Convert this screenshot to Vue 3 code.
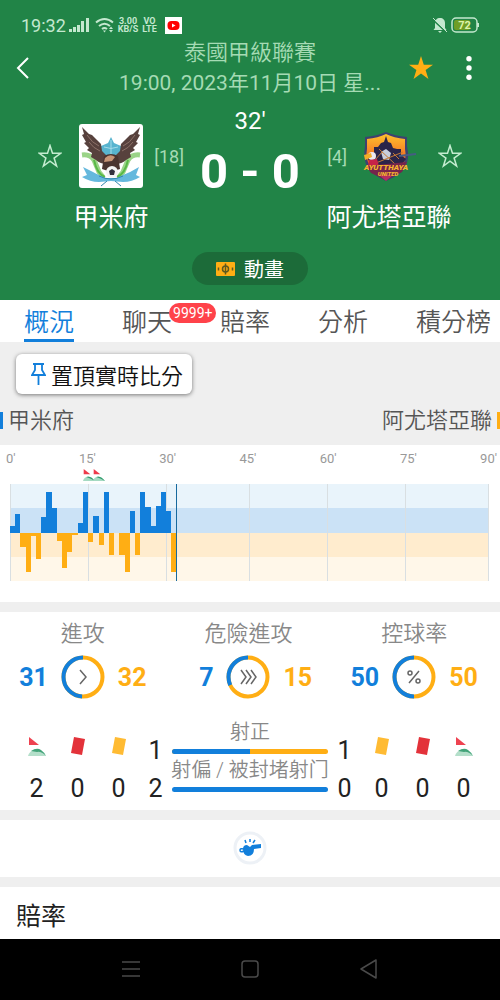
<script setup>
import { ref } from "vue";

const tabs = [
  { name: "概況" },
  { name: "聊天", badge: "9999+" },
  { name: "賠率" },
  { name: "分析" },
  { name: "積分榜" },
];
const activeTab = ref("概況");

// 45 + 1 minutes in the first half, 45 + 1 in the second
const totalMinutes = 92;
const currentMinute = 32;
const axis = ["0'", "15'", "30'", "45'", "60'", "75'", "90'"];
const gridLines = [0, 15, 30, 46, 61, 76, 92];
const corners = [15, 17];

// positive: home pressure, negative: away pressure
const pressure = [
  6, 18, -14, -39, -3, -26, 15, 40, 24, -8, -35, -19, -2, 9, 40, -9, 16, -12,
  40, -22, 0, -22, -39, 21, -22, 40, 25, 6, 26, 40, 21, -39,
];

const stats = [
  { name: "進攻", home: 31, away: 32, icon: "M19 15l6 7-6 7" },
  {
    name: "危險進攻",
    home: 7,
    away: 15,
    icon: "M15 15l5 7-5 7M20 15l5 7-5 7M25 15l5 7-5 7",
  },
  {
    name: "控球率",
    home: 50,
    away: 50,
    icon: "M27 16L17 28M16 18a2 2 0 1 0 4 0a2 2 0 1 0-4 0M24 26a2 2 0 1 0 4 0a2 2 0 1 0-4 0",
  },
];

const homeCards = [
  { type: "corner", count: 2 },
  { type: "red", count: 0 },
  { type: "yellow", count: 0 },
];
const awayCards = [
  { type: "yellow", count: 0 },
  { type: "red", count: 0 },
  { type: "corner", count: 0 },
];

const shots = [
  { name: "射正", home: 1, away: 1 },
  { name: "射偏 / 被封堵射门", home: 2, away: 0 },
];

const percent = (item) => (item.home / (item.home + item.away)) * 100;
</script>

<template>
  <div class="page">
    <header class="header">
      <div class="status">
        <span class="clock">19:32</span>
        <svg class="signal" width="20" height="16" viewBox="0 0 20 16">
          <path
            d="M0 12h3v3H0zM4 10h3v5H4zM8 8h3v7H8zM12 4h3v11h-3zM17 1h3v14h-3z"
            fill="currentColor"
          />
        </svg>
        <svg class="wifi" width="20" height="16" viewBox="0 0 20 16">
          <path
            d="M1 5.500Q9.500-1.500 18 5.500M4 9Q9.500 4.500 15 9M7 12Q9.500 10 12 12"
            fill="none"
            stroke="currentColor"
            stroke-width="2"
          />
          <path
            d="M8 13.500h3L9.500 15.500zM14 12l2-2.500 2 2.500zM14 13l2 2.500 2-2.500z"
            fill="currentColor"
          />
        </svg>
        <span class="tiny speed"><b>3.00</b><b>KB/S</b></span>
        <span class="tiny volte"><b>VO</b><b>LTE</b></span>
        <svg width="17" height="17" viewBox="0 0 17 17">
          <rect width="17" height="17" fill="#fff" />
          <rect x="2.500" y="4" width="12" height="9" rx="4" fill="#f00" />
          <path d="M7 6.500v4l3.500-2z" fill="#fff" />
        </svg>
        <svg class="bell" width="16" height="16" viewBox="0 0 16 16">
          <path
            d="M8 1c-3 0-5 2-5 5v5l-1.500 2h13L13 11V6c0-3-2-5-5-5zM6 14h4l-2 2z"
            fill="currentColor"
          />
          <path d="M0 2l14 13" stroke="#218447" stroke-width="1.500" />
          <path d="M1 1l14 14" stroke="currentColor" stroke-width="1" />
        </svg>
        <svg class="battery" width="28" height="16" viewBox="0 0 28 16">
          <rect x="3" y="3" width="16" height="10" rx="2" fill="#6f9d25" />
          <rect
            x="1"
            y="1"
            width="25"
            height="14"
            rx="4"
            fill="none"
            stroke="currentColor"
            stroke-width="1.500"
          />
          <path d="M27 6v4" stroke="currentColor" stroke-width="2" />
          <text x="13.500" y="12" text-anchor="middle">72</text>
        </svg>
      </div>

      <div class="bar">
        <button class="icon-btn" aria-label="返回">
          <svg width="24" height="24" viewBox="0 0 24 24">
            <path
              d="M17 2L7 12l10 10"
              fill="none"
              stroke="#fff"
              stroke-width="2"
            />
          </svg>
        </button>
        <div class="title">
          <p class="league">泰國甲級聯賽</p>
          <p class="date">19:00, 2023年11月10日 星...</p>
        </div>
        <button class="icon-btn" aria-label="收藏">
          <svg width="24" height="24" viewBox="0 0 24 24">
            <path
              d="M12 0l2.800 8.700H24l-7.400 5.400L19.400 23 12 17.600 4.600 23l2.800-8.900L0 8.700h9.200z"
              fill="#ffae14"
            />
          </svg>
        </button>
        <button class="icon-btn" aria-label="更多">
          <svg width="24" height="24" viewBox="0 0 24 24" fill="#fff">
            <circle cx="12" cy="2.700" r="2.700" />
            <circle cx="12" cy="12" r="2.700" />
            <circle cx="12" cy="21.300" r="2.700" />
          </svg>
        </button>
      </div>

      <div class="match">
        <div class="team">
          <button class="icon-btn" aria-label="關注甲米府">
            <svg width="24" height="24" viewBox="0 0 24 24">
              <path
                d="M12 1.500l2.500 7.800h8.200l-6.600 4.800 2.500 7.900-6.600-4.900L5.400 22l2.500-7.900-6.600-4.800h8.200z"
                fill="none"
                stroke="#c4ecd0"
                stroke-width="1.500"
              />
            </svg>
          </button>
          <svg width="64" height="64" viewBox="0 0 64 64">
            <rect width="64" height="64" rx="3" fill="#fff" />
            <path
              d="M3 31q8-1 12 5l5 12 4 5M61 31q-8-1-12 5l-5 12-4 5"
              fill="none"
              stroke="#9bd488"
              stroke-width="5"
            />
            <path
              d="M15 36q3 14 11 17M49 36q-3 14-11 17"
              fill="none"
              stroke="#59b947"
              stroke-width="2"
            />
            <path d="M32 13l3 6 7 3v10l-10 6-10-6V22l7-3z" fill="#58b4cf" />
            <path d="M32 16v18M25 23q7 3 14 0" stroke="#a4dcea" fill="none" />
            <path
              d="M3 3l7 7 3 1 5 5 4 4 1 7 6 6-1 7q-7 0-11-4l-5-3 1-4-5-3 2-2-5-5 2-1-4-7 2-1z"
              fill="#57413d"
            />
            <path
              d="M61 3l-7 7-3 1-5 5-4 4-1 7-6 6 1 7q7 0 11-4l5-3-1-4 5-3-2-2 5-5-2-1 4-7-2-1z"
              fill="#57413d"
            />
            <path
              d="M8 11q5 8 12 11M10 18q4 6 11 9M58 9M56 11q-5 8-12 11M54 18q-4 6-11 9"
              fill="none"
              stroke="#8d7269"
            />
            <path d="M25 32q7-4 14 0l2 13-9 3-9-3z" fill="#4a3430" />
            <path d="M26 34q5-5 10-1l-3 4-8 1z" fill="#c79577" />
            <circle cx="33" cy="48" r="6" fill="#f4f4f4" />
            <path d="M33 45l3 2-1 4h-4l-1-4zM28 44l3-1M36 53l3-3" fill="#33303c" />
            <path
              d="M4 43q10 5 16 8l6 3h12l6-3q8-3 16-8l-3 8 4 2q-8 5-17 5l-12-1-12 1q-9 0-17-5l5-2z"
              fill="#65b8dd"
            />
            <path
              d="M20 52q12 6 24 0M22 62l6-5M42 62l-6-5"
              fill="none"
              stroke="#3288ae"
            />
          </svg>
          <span class="rank">[18]</span>
          <h2 class="name">甲米府</h2>
        </div>

        <div class="result">
          <p class="minute">32'</p>
          <p class="score">0 - 0</p>
        </div>

        <div class="team">
          <span class="rank away-rank">[4]</span>
          <svg width="64" height="64" viewBox="0 0 64 64">
            <defs>
              <linearGradient id="sunset" x1="0" y1="0" x2="0" y2="1">
                <stop offset="0" stop-color="#ffc12e" />
                <stop offset="1" stop-color="#f0551f" />
              </linearGradient>
            </defs>
            <path
              d="M8 13q12-1 21-5 9 4 21 5v9q3 12-2 22-6 8-19 13-13-6-19-14-4-9-2-21z"
              fill="#3e4170"
            />
            <path
              d="M10 15q11-1 19-5 8 4 19 5v10q2 10-3 17H13q-5-8-3-17z"
              fill="url(#sunset)"
            />
            <path
              d="M10 33l7-4v-6h4l3-4 3-1 2-6 2 6 3 1 2 5 4 1h4v6l5 4-6 8H15z"
              fill="#2b2449"
            />
            <path d="M24 28l5-3 5 4-2 7-6-1z" fill="#c9cedd" />
            <path
              d="M14 41l32-13M22 25l16 15M18 36l7-8M36 29l6 6"
              stroke="#c57a37"
              stroke-width="1"
            />
            <path d="M42 32l17-2" stroke="#465c83" stroke-width="2" />
            <circle cx="15" cy="32" r="4" fill="#ede8ef" />
            <path d="M7 31l7-2 1 4-7 3z" fill="#f2ad29" />
            <path d="M12 36l8-1 2 7H11z" fill="#c72348" />
            <path d="M9 42l41-4-5 10-16 8-15-7z" fill="#75244c" />
            <path d="M22 51h14l-7 6z" fill="#b52e61" />
            <text class="crest-name" x="29" y="46" text-anchor="middle">
              AYUTTHAYA
            </text>
            <text class="crest-sub" x="31" y="52" text-anchor="middle">
              UNITED
            </text>
          </svg>
          <button class="icon-btn away-star" aria-label="關注阿尤塔亞聯">
            <svg width="24" height="24" viewBox="0 0 24 24">
              <path
                d="M12 1.500l2.500 7.800h8.200l-6.600 4.800 2.500 7.900-6.600-4.900L5.400 22l2.500-7.900-6.600-4.800h8.200z"
                fill="none"
                stroke="#c4ecd0"
                stroke-width="1.500"
              />
            </svg>
          </button>
          <h2 class="name">阿尤塔亞聯</h2>
        </div>
      </div>

      <button class="animation">
        <svg width="19" height="14" viewBox="0 0 19 14">
          <rect width="19" height="14" rx="1" fill="#ffae14" />
          <path
            d="M9.500 1.500v11M2.500 5.500v3M16.500 5.500v3"
            stroke="#5f5a1e"
            stroke-width="1.500"
          />
          <circle
            cx="9.500"
            cy="7"
            r="3"
            fill="none"
            stroke="#5f5a1e"
            stroke-width="1.500"
          />
        </svg>
        動畫
      </button>
    </header>

    <nav class="tabs">
      <button
        v-for="tab in tabs"
        :key="tab.name"
        class="tab"
        :class="{ active: activeTab === tab.name }"
        @click="activeTab = tab.name"
      >
        {{ tab.name }}
        <span v-if="tab.badge" class="badge">{{ tab.badge }}</span>
      </button>
    </nav>

    <section class="top">
      <button class="pin">
        <svg width="15" height="24" viewBox="0 0 15 24">
          <path
            d="M2 2h11M4 2v6l-3 5h13l-3-5V2M7.500 13v10"
            fill="none"
            stroke="#127fdb"
            stroke-width="1.800"
          />
        </svg>
        置頂實時比分
      </button>
      <div class="legend">
        <span class="home-side">甲米府</span>
        <span class="away-side">阿尤塔亞聯</span>
      </div>
    </section>

    <section class="chart">
      <div class="axis">
        <span v-for="label in axis" :key="label">{{ label }}</span>
      </div>
      <div class="events">
        <svg
          v-for="minute in corners"
          :key="minute"
          :style="{ gridColumn: `${minute} / span 2` }"
          width="12"
          height="12"
          viewBox="0 0 18 18"
        >
          <path d="M1 0l10 8H1z" fill="#ee3b4b" />
          <path d="M0 18q1-5 8-7 5 1 10 7z" fill="#a5dac2" />
          <path d="M5 12q7-2 13 6-6-4-13-6z" fill="#2f9a6c" />
        </svg>
      </div>
      <svg
        class="plot"
        :viewBox="`0 0 ${totalMinutes} 96`"
        preserveAspectRatio="none"
        shape-rendering="crispEdges"
      >
        <rect width="92" height="24" fill="#e9f4fb" />
        <rect y="24" width="92" height="24" fill="#cbe2f6" />
        <rect y="48" width="92" height="24" fill="#ffecce" />
        <rect y="72" width="92" height="24" fill="#fff7e9" />
        <line
          v-for="x in gridLines"
          :key="x"
          :x1="x"
          :x2="x"
          y1="0"
          y2="96"
          class="grid-line"
        />
        <rect
          v-for="(value, index) in pressure"
          :key="index"
          :x="index"
          :y="value > 0 ? 48 - value : 48"
          width="1"
          :height="Math.abs(value)"
          :fill="value > 0 ? '#127fdb' : '#ffae14'"
        />
        <line
          :x1="currentMinute"
          :x2="currentMinute"
          y1="0"
          y2="96"
          class="now-line"
        />
      </svg>
    </section>

    <section class="stats">
      <div class="rings">
        <div v-for="item in stats" :key="item.name" class="ring">
          <p class="label">{{ item.name }}</p>
          <div class="ring-row">
            <b class="home">{{ item.home }}</b>
            <svg width="44" height="44" viewBox="0 0 44 44" fill="none">
              <circle cx="22" cy="22" r="19.500" stroke="#ffae14" stroke-width="4" />
              <circle
                cx="22"
                cy="22"
                r="19.500"
                stroke="#127fdb"
                stroke-width="4"
                pathLength="100"
                :stroke-dasharray="`${percent(item)} 100`"
                transform="translate(44 0) scale(-1 1) rotate(-90 22 22)"
              />
              <path :d="item.icon" stroke="#666" stroke-width="1.500" />
            </svg>
            <b class="away">{{ item.away }}</b>
          </div>
        </div>
      </div>

      <div class="details">
        <template v-for="(cards, side) in [homeCards, awayCards]" :key="side">
          <div class="cards" :class="{ last: side === 1 }">
            <div v-for="card in cards" :key="card.type" class="card">
              <svg width="18" height="19" viewBox="0 0 18 19">
                <template v-if="card.type === 'corner'">
                  <path d="M1 0l10 8H1z" fill="#ee4250" />
                  <path d="M0 19q1-5 8-7 5 0 10 7z" fill="#b4dfca" />
                  <path d="M3 14q6-4 10-1 3 2 5 6-5-5-9-4z" fill="#43a47a" />
                </template>
                <path
                  v-else
                  d="M5 0l11 2-3 16L2 16z"
                  :fill="card.type === 'red' ? '#e3323a' : '#ffbb33'"
                />
              </svg>
              <span>{{ card.count }}</span>
            </div>
          </div>
        </template>

        <div class="shots">
          <div v-for="shot in shots" :key="shot.name" class="shot">
            <span class="shot-count">{{ shot.home }}</span>
            <div class="shot-main">
              <p class="shot-name">{{ shot.name }}</p>
              <div class="track">
                <div class="fill" :style="{ width: percent(shot) + '%' }"></div>
              </div>
            </div>
            <span class="shot-count">{{ shot.away }}</span>
          </div>
        </div>
      </div>
    </section>

    <section class="whistle">
      <svg width="34" height="34" viewBox="0 0 34 34">
        <circle cx="17" cy="17" r="15" fill="#fff" stroke="#edf1f6" stroke-width="3" />
        <path
          d="M10 18q0-4 4-4l3 2 2-2 9-1v4l-7 1q0 7-6 7-5-1-5-7z"
          fill="#127fdb"
        />
        <path
          d="M11 18q-4-1-4 1 0 3 4 1M13 12l-1-3M17 11V8M20 12l2-3"
          fill="none"
          stroke="#127fdb"
          stroke-width="1.500"
        />
      </svg>
    </section>

    <section class="odds">
      <h2>賠率</h2>
    </section>

    <footer class="system-nav">
      <button class="icon-btn" aria-label="選單">
        <svg width="20" height="20" viewBox="0 0 20 20">
          <path d="M1 3h18M1 10h18M1 17h18" />
        </svg>
      </button>
      <button class="icon-btn" aria-label="主畫面">
        <svg width="20" height="20" viewBox="0 0 20 20">
          <rect x="2" y="2" width="16" height="16" rx="3" />
        </svg>
      </button>
      <button class="icon-btn" aria-label="上一頁">
        <svg width="20" height="20" viewBox="0 0 20 20">
          <path d="M17 1v18L2 10z" stroke-linejoin="round" />
        </svg>
      </button>
    </footer>
  </div>
</template>

<style>
body {
  margin: 0;
  background: #fff;
}
</style>

<style scoped>
.page {
  font-family: Roboto, "Noto Sans CJK TC", sans-serif;
  color: #222;
  background: #fff;
}

p,
h2 {
  margin: 0;
  font-weight: 400;
}

button {
  padding: 0;
  border: 0;
  background: none;
  font-family: inherit;
  color: inherit;
  cursor: pointer;
}

svg {
  display: block;
  flex: none;
}

.icon-btn {
  display: flex;
}

.header {
  padding-bottom: 15px;
  background: #218447;
  color: #fff;
}

.status {
  display: flex;
  align-items: center;
  height: 24px;
  padding: 13px 21px 0;
  color: #c4e8cf;
}

.clock {
  font-size: 18px;
}

.signal {
  margin-left: 3px;
}

.wifi {
  margin-left: 6px;
}

.tiny {
  display: flex;
  flex-direction: column;
  align-items: center;
  font-size: 9px;
  line-height: 8px;
}

.speed {
  margin-left: 3px;
}

.volte {
  margin: 0 8px 0 4px;
}

.bell {
  margin-left: auto;
}

.battery {
  margin-left: 3px;
}

.battery text {
  font-size: 11px;
  font-weight: 700;
  fill: #dcf3a8;
}

.bar {
  display: flex;
  align-items: center;
  gap: 24px;
  padding: 1px 19px 0 11px;
}

.title {
  flex: 1;
  margin: 0 2px 0 58px;
  text-align: center;
  line-height: 30px;
  color: #a5dbb4;
  white-space: nowrap;
}

.league {
  font-size: 22px;
  font-weight: 350;
}

.date {
  font-size: 21px;
}

.match {
  display: flex;
  justify-content: space-between;
  padding: 9px 38px 0;
}

.team {
  display: grid;
  grid-template-columns: 41px 64px 41px;
  align-items: center;
  align-content: start;
  row-gap: 14px;
  padding-top: 17px;
}

.rank {
  justify-self: end;
  font-size: 18px;
  color: #a5dbb4;
}

.away-rank {
  padding-right: 10px;
}

.away-star {
  justify-self: end;
}

.name {
  grid-column: 1 / -1;
  text-align: center;
  font-size: 25px;
  line-height: 32px;
}

.crest-name {
  font-size: 8px;
  font-weight: 900;
  font-style: italic;
  fill: #f7b52f;
}

.crest-sub {
  font-size: 6px;
  font-weight: 900;
  font-style: italic;
  fill: #f7b52f;
}

.result {
  text-align: center;
}

.minute {
  font-size: 24px;
  line-height: 28px;
}

.score {
  margin-top: 8px;
  font-size: 49px;
  font-weight: 700;
  line-height: 58px;
}

.animation {
  display: flex;
  align-items: center;
  gap: 9px;
  height: 33px;
  margin: 18px auto 0;
  padding: 0 24px;
  border-radius: 17px;
  background: #1c6b39;
  font-size: 20px;
}

.tabs {
  display: flex;
  gap: 48px;
  padding: 0 9px 0 24px;
}

.tab {
  position: relative;
  height: 42px;
  padding-top: 6px;
  border-bottom: 3px solid transparent;
  font-size: 25px;
  font-weight: 350;
  line-height: 33px;
  color: #555;
  white-space: nowrap;
}

.tab.active {
  border-color: #127fdb;
  color: #127fdb;
}

.badge {
  position: absolute;
  top: 3px;
  left: 100%;
  margin-left: -3px;
  padding: 0 4px;
  border-radius: 10px;
  background: #ff424a;
  color: #fff;
  font-size: 14px;
  font-weight: 400;
  line-height: 20px;
}

.top {
  padding-top: 12px;
  background: #efefef;
}

.pin {
  display: flex;
  align-items: center;
  gap: 5px;
  height: 40px;
  margin-left: 16px;
  padding: 0 9px 0 15px;
  border-radius: 6px;
  background: #fff;
  box-shadow: 0 1px 4px rgba(0, 0, 0, 0.5);
  font-size: 22px;
  font-weight: 350;
  color: #111;
}

.legend {
  display: flex;
  justify-content: space-between;
  align-items: center;
  height: 49px;
  padding-top: 2px;
  font-size: 22px;
  font-weight: 350;
  line-height: 17px;
  color: #555;
}

.home-side {
  padding-left: 5px;
  border-left: 3px solid #127fdb;
}

.away-side {
  padding-right: 5px;
  border-right: 3px solid #ffae14;
}

.chart {
  padding-bottom: 21px;
  border-bottom: 10px solid #efefef;
}

.axis {
  display: flex;
  justify-content: space-between;
  padding: 4px 3px 0 6px;
  font-size: 13px;
  line-height: 20px;
  color: #999;
}

.events {
  display: grid;
  grid-template-columns: repeat(92, minmax(0, 1fr));
  height: 15px;
  margin: 0 11px 0 10px;
}

.plot {
  width: calc(100% - 21px);
  height: 97px;
  margin-left: 10px;
}

.grid-line {
  stroke: #d9dfe2;
  stroke-width: 1px;
  vector-effect: non-scaling-stroke;
}

.now-line {
  stroke: #17699e;
  stroke-width: 1px;
  vector-effect: non-scaling-stroke;
}

.stats {
  padding: 7px 0;
  border-bottom: 10px solid #efefef;
}

.rings {
  display: grid;
  grid-template-columns: repeat(3, 1fr);
  padding-right: 3px;
}

.label {
  text-align: center;
  font-size: 22px;
  font-weight: 350;
  line-height: 30px;
  color: #888;
}

.ring-row {
  display: grid;
  grid-template-columns: 1fr 44px 1fr;
  align-items: center;
  column-gap: 13px;
  margin-top: 6px;
  font-size: 25px;
}

.home {
  text-align: right;
  color: #127fdb;
}

.away {
  color: #ffae14;
}

.details {
  display: flex;
  margin-top: 19px;
  padding: 0 16px;
}

.cards {
  display: grid;
  grid-template-columns: repeat(3, 41px);
  padding-top: 19px;
}

.cards.last {
  order: 3;
}

.card {
  display: flex;
  flex-direction: column;
  align-items: center;
  gap: 19px;
  font-size: 25px;
  line-height: 28px;
}

.shots {
  flex: 1;
  order: 2;
  min-width: 0;
}

.shot {
  display: grid;
  grid-template-columns: 33px minmax(0, 1fr) 33px;
  align-items: end;
  height: 38px;
}

.shot-count {
  text-align: center;
  font-size: 25px;
  line-height: 28px;
}

.shot-main {
  display: flex;
  flex-direction: column;
  align-items: center;
  padding-bottom: 11px;
}

.shot-name {
  font-size: 20px;
  font-weight: 350;
  line-height: 28px;
  color: #888;
  white-space: nowrap;
}

.track {
  width: 100%;
  height: 5px;
  margin-top: 3px;
  border-radius: 3px;
  background: #ffae14;
  overflow: hidden;
}

.fill {
  height: 100%;
  background: #127fdb;
}

.whistle {
  display: flex;
  justify-content: center;
  padding: 11px 0 12px;
  border-bottom: 10px solid #efefef;
}

.odds {
  padding: 14px 16px 6px;
}

.odds h2 {
  font-size: 25px;
  line-height: 32px;
}

.system-nav {
  display: flex;
  justify-content: center;
  gap: 99px;
  padding: 20px 0 21px;
  background: #000;
}

.system-nav svg {
  fill: none;
  stroke: #4a4a4a;
  stroke-width: 1.5;
}
</style>
